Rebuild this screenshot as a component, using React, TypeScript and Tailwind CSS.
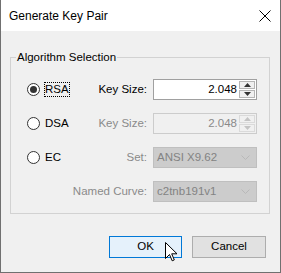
import React from "react";

const font = { fontFamily: '"Segoe UI", "Liberation Sans", Arial, sans-serif' };

function Radio({ checked }: { checked?: boolean }) {
  return (
    <div className="w-[13px] h-[13px] rounded-full border border-[#333333] bg-white flex items-center justify-center shrink-0">
      {checked && <div className="w-[7px] h-[7px] rounded-full bg-[#333333]" />}
    </div>
  );
}

function Spinner({ disabled }: { disabled?: boolean }) {
  const c = disabled ? "#c4c4c4" : "#333333";
  const b = disabled ? "border-[#dadada]" : "border-[#b5b5b5]";
  return (
    <div className="flex flex-col h-[17px] w-[16px] mr-[1px] gap-[1px]">
      <div className={`flex-1 border ${b} bg-[#f0f0f0] flex items-center justify-center`}>
        <svg width="7" height="4" viewBox="0 0 7 4"><path d="M3.5 0 L7 4 L0 4 Z" fill={c} /></svg>
      </div>
      <div className={`flex-1 border ${b} bg-[#f0f0f0] flex items-center justify-center`}>
        <svg width="7" height="4" viewBox="0 0 7 4"><path d="M0 0 L7 0 L3.5 4 Z" fill={c} /></svg>
      </div>
    </div>
  );
}

function NumInput({ disabled }: { disabled?: boolean }) {
  return (
    <div
      className={`ml-[6px] w-[104px] h-[21px] border flex items-center shrink-0 ${
        disabled ? "border-[#cccccc] bg-[#f0f0f0] text-[#8a8a8a]" : "border-[#a0a0a0] bg-white text-black"
      }`}
    >
      <div className="flex-1 text-right pr-[2px] text-[11.5px] leading-none">2.048</div>
      <Spinner disabled={disabled} />
    </div>
  );
}

function Select({ value }: { value: string }) {
  return (
    <div className="ml-[6px] w-[104px] h-[21px] border border-[#bfbfbf] bg-[#cccccc] flex items-center text-[#838383] shrink-0">
      <div className="flex-1 pl-[3px] text-[11.5px] leading-none">{value}</div>
      <svg width="9" height="6" viewBox="0 0 9 6" className="mr-[6px]">
        <path d="M0.5 0.5 L4.5 4.5 L8.5 0.5" fill="none" stroke="#b8b8b8" strokeWidth="1" />
      </svg>
    </div>
  );
}

function Label({ children, disabled }: { children: React.ReactNode; disabled?: boolean }) {
  return (
    <div className={`w-[60px] shrink-0 flex justify-end whitespace-nowrap ${disabled ? "text-[#8a8a8a]" : "text-black"}`}>
      {children}
    </div>
  );
}

export default function App() {
  return (
    <div
      className="relative w-[281px] h-[273px] bg-[#f0f0f0] border-l border-r border-b border-[#707070] flex flex-col text-[11.5px] text-black"
      style={font}
    >
      <div className="h-[31px] bg-white flex items-center justify-between pl-[8px] pr-[9px] shrink-0">
        <span className="text-[12px] text-black">Generate Key Pair</span>
        <svg width="12" height="12" viewBox="0 0 12 12">
          <path d="M0.5 0.5 L11.5 11.5 M11.5 0.5 L0.5 11.5" stroke="#000" strokeWidth="1" />
        </svg>
      </div>

      <div className="relative ml-[9px] mt-[26px] w-[260px] h-[157px] border border-[#d2d2d2] flex flex-col pt-[21px] pl-[16px] gap-[13px]">
        <span className="absolute left-[5px] top-[-8px] bg-[#f0f0f0] px-[1px] leading-[14px]">Algorithm Selection</span>

        <div className="flex items-center h-[21px]">
          <div className="w-[60px] shrink-0 flex items-center">
            <Radio checked />
            <span className="ml-[4px] border border-dotted border-black leading-[13px]">RSA</span>
          </div>
          <Label>Key Size:</Label>
          <NumInput />
        </div>

        <div className="flex items-center h-[21px]">
          <div className="w-[60px] shrink-0 flex items-center">
            <Radio />
            <span className="ml-[5px]">DSA</span>
          </div>
          <Label disabled>Key Size:</Label>
          <NumInput disabled />
        </div>

        <div className="flex items-center h-[21px]">
          <div className="w-[60px] shrink-0 flex items-center">
            <Radio />
            <span className="ml-[5px]">EC</span>
          </div>
          <Label disabled>Set:</Label>
          <Select value="ANSI X9.62" />
        </div>

        <div className="flex items-center h-[21px]">
          <div className="w-[60px] shrink-0" />
          <Label disabled>Named Curve:</Label>
          <Select value="c2tnb191v1" />
        </div>
      </div>

      <div className="flex justify-end gap-[10px] mt-[22px] pr-[14px]">
        <div className="w-[73px] h-[22px] border border-[#0078d7] bg-[#e5f1fb] flex items-center justify-center">OK</div>
        <div className="w-[74px] h-[22px] border border-[#adadad] bg-[#e1e1e1] flex items-center justify-center">Cancel</div>
      </div>

      <svg className="absolute left-[164px] top-[242px]" width="13" height="21" viewBox="0 0 13 21">
        <path
          d="M0.5 0.5 L0.5 16.5 L4.5 12.5 L7.2 18.8 L9.3 17.9 L6.7 11.8 L12 11.8 Z"
          fill="#ffffff"
          stroke="#000000"
          strokeWidth="1"
          strokeLinejoin="miter"
        />
      </svg>
    </div>
  );
}
